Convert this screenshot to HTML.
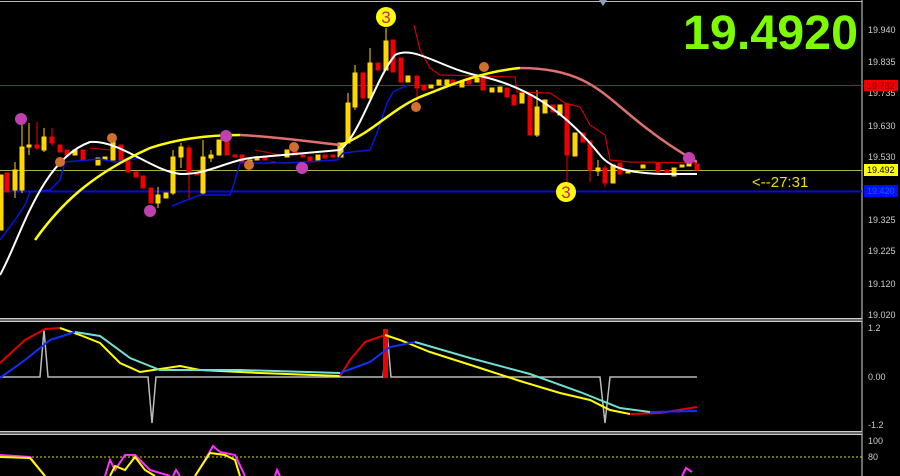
<!DOCTYPE html><html><head><style>body{margin:0;background:#000;width:900px;height:476px;overflow:hidden}svg{display:block}text{font-family:"Liberation Sans",sans-serif}</style></head><body>
<svg width="900" height="476" xmlns="http://www.w3.org/2000/svg">
<rect width="900" height="476" fill="#000"/>
<line x1="0" y1="1.5" x2="862" y2="1.5" stroke="#bbb"/>
<path d="M599 0 L607 0 L603 6Z" fill="#8aa0b8"/>
<line x1="862" y1="0" x2="862" y2="476" stroke="#ddd"/>
<line x1="0" y1="85.5" x2="862" y2="85.5" stroke="#d80000"/>
<line x1="0" y1="170.5" x2="862" y2="170.5" stroke="#b0b030"/>
<line x1="0" y1="191.5" x2="862" y2="191.5" stroke="#0010d0" stroke-width="2"/>
<g fill="#ccc" font-size="9">
<text x="868" y="33">19.940</text><text x="868" y="65">19.835</text><text x="868" y="96">19.735</text><text x="868" y="129">19.630</text><text x="868" y="160">19.530</text><text x="868" y="223">19.325</text><text x="868" y="254">19.225</text><text x="868" y="287">19.120</text><text x="868" y="318">19.020</text>
<text x="868" y="331">1.2</text><text x="868" y="380">0.00</text><text x="868" y="428">-1.2</text><text x="868" y="444">100</text><text x="868" y="460">80</text></g>
<rect x="864" y="80" width="34" height="11" fill="#f00000"/><text x="867" y="89" font-size="9" fill="#800">19.762</text>
<rect x="864" y="164" width="34" height="12" fill="#ffff00"/><text x="867" y="173" font-size="9" fill="#000">19.492</text>
<rect x="864" y="185" width="34" height="12" fill="#0010f0"/><text x="867" y="194" font-size="9" fill="#0060ff">19.420</text>
<text x="683" y="49" font-size="48" font-weight="bold" fill="#7cfc00" textLength="175" lengthAdjust="spacingAndGlyphs">19.4920</text>
<text x="752" y="187" font-size="15" fill="#e8e000">&lt;--27:31</text>
<g stroke-width="1">
<g fill="#ffd700" stroke="#ffd700">
<rect x="0" y="175" width="3" height="55"/><rect x="13" y="170" width="4" height="20"/><line x1="15" y1="162" x2="15" y2="198"/><rect x="20" y="147" width="4" height="43"/><line x1="22" y1="117" x2="22" y2="193"/><rect x="27" y="145" width="4" height="2"/><line x1="29" y1="123" x2="29" y2="155"/><rect x="42" y="137" width="4" height="13"/><line x1="44" y1="128" x2="44" y2="152"/><rect x="73" y="150" width="4" height="5"/><rect x="96" y="158" width="4" height="7"/><rect x="103" y="157" width="4" height="3"/><rect x="111" y="142" width="4" height="18"/><rect x="156" y="195" width="4" height="8"/><line x1="158" y1="187" x2="158" y2="208"/><rect x="164" y="193" width="4" height="5"/><rect x="171" y="157" width="4" height="36"/><line x1="173" y1="150" x2="173" y2="195"/><rect x="179" y="147" width="4" height="10"/><line x1="181" y1="143" x2="181" y2="168"/><rect x="201" y="157" width="4" height="36"/><line x1="203" y1="140" x2="203" y2="195"/><rect x="209" y="155" width="4" height="3"/><line x1="211" y1="150" x2="211" y2="162"/><rect x="217" y="140" width="4" height="15"/><rect x="248" y="160" width="4" height="3"/><rect x="255" y="157" width="4" height="3"/><rect x="285" y="150" width="4" height="7"/><rect x="316" y="155" width="4" height="5"/><rect x="338" y="143" width="5" height="14"/><rect x="346" y="103" width="4" height="40"/><line x1="348" y1="93" x2="348" y2="143"/><rect x="353" y="73" width="4" height="34"/><line x1="355" y1="65" x2="355" y2="110"/><rect x="368" y="63" width="4" height="35"/><line x1="370" y1="48" x2="370" y2="98"/><rect x="384" y="41" width="4" height="29"/><line x1="386" y1="28" x2="386" y2="70"/><rect x="406" y="76" width="4" height="6"/><rect x="429" y="85" width="4" height="3"/><rect x="437" y="80" width="4" height="5"/><rect x="445" y="80" width="4" height="5"/><rect x="460" y="82" width="4" height="5"/><rect x="475" y="78" width="4" height="4"/><rect x="490" y="88" width="4" height="4"/><rect x="498" y="87" width="4" height="5"/><rect x="520" y="93" width="4" height="10"/><rect x="535" y="107" width="4" height="28"/><line x1="537" y1="90" x2="537" y2="137"/><rect x="543" y="100" width="4" height="13"/><rect x="558" y="105" width="4" height="10"/><rect x="573" y="133" width="4" height="23"/><rect x="596" y="168" width="4" height="3"/><line x1="598" y1="160" x2="598" y2="176"/><rect x="611" y="165" width="4" height="18"/><rect x="626" y="170" width="4" height="3"/><rect x="641" y="165" width="4" height="3"/><rect x="672" y="168" width="4" height="8"/><rect x="680" y="165" width="4" height="2"/><rect x="687" y="163" width="4" height="3"/></g>
<g fill="#f00000" stroke="#f00000">
<rect x="5" y="173" width="4" height="19"/><rect x="35" y="145" width="4" height="3"/><line x1="37" y1="122" x2="37" y2="150"/><rect x="50" y="137" width="4" height="6"/><line x1="52" y1="128" x2="52" y2="146"/><rect x="58" y="145" width="4" height="7"/><rect x="65" y="150" width="4" height="5"/><rect x="81" y="150" width="4" height="10"/><rect x="119" y="145" width="4" height="15"/><rect x="126" y="160" width="4" height="12"/><rect x="134" y="172" width="4" height="5"/><rect x="141" y="176" width="4" height="12"/><rect x="149" y="188" width="4" height="15"/><rect x="187" y="148" width="4" height="24"/><line x1="189" y1="145" x2="189" y2="200"/><rect x="195" y="173" width="4" height="2"/><rect x="225" y="140" width="4" height="15"/><rect x="233" y="155" width="4" height="2"/><rect x="240" y="155" width="4" height="8"/><rect x="263" y="158" width="4" height="2"/><rect x="271" y="162" width="4" height="1"/><rect x="293" y="150" width="4" height="5"/><rect x="301" y="155" width="4" height="2"/><rect x="308" y="157" width="4" height="5"/><rect x="323" y="155" width="4" height="3"/><rect x="331" y="155" width="4" height="2"/><rect x="361" y="73" width="4" height="25"/><rect x="376" y="63" width="4" height="7"/><rect x="391" y="40" width="4" height="32"/><rect x="399" y="58" width="4" height="24"/><rect x="415" y="76" width="4" height="12"/><line x1="417" y1="76" x2="417" y2="108"/><rect x="422" y="85" width="4" height="5"/><rect x="451" y="80" width="4" height="4"/><rect x="467" y="80" width="4" height="4"/><rect x="481" y="75" width="4" height="15"/><rect x="505" y="88" width="4" height="9"/><rect x="512" y="95" width="4" height="10"/><rect x="528" y="95" width="4" height="40"/><rect x="551" y="105" width="4" height="7"/><rect x="565" y="104" width="4" height="51"/><line x1="567" y1="104" x2="567" y2="185"/><rect x="581" y="133" width="4" height="9"/><rect x="588" y="141" width="4" height="29"/><line x1="590" y1="141" x2="590" y2="182"/><rect x="603" y="168" width="4" height="15"/><line x1="605" y1="165" x2="605" y2="187"/><rect x="618" y="163" width="4" height="11"/><rect x="656" y="163" width="4" height="9"/><rect x="665" y="170" width="4" height="4"/><rect x="695" y="164" width="4" height="6"/></g></g>
<g fill="none" stroke-linejoin="round">
<path d="M0 240 L15 220 L25 205 L30 192 L50 190 L60 180 L65 162 L100 159 L115 162 L140 158 M172 206 L187 200 L200 195 L230 195 L233 187 L240 163 L287 163 L337 160 L343 153 L370 150 L377 133 L387 103 L393 92 L408 85" stroke="#0018e0" stroke-width="1.5"/>
<path d="M414 25 L420 50 L430 68 L440 75 L515 77 L517 92 L550 93 L565 103 L580 107 L590 125 L605 135 L610 160 L630 162 L697 163" stroke="#d00000" stroke-width="1.2"/>
<path d="M90 148 L110 150 M255 150 L280 155" stroke="#d00000"/>
<path d="M0 275 C20 240,40 160,90 142 C120 140,150 170,180 174 C210 175,230 158,260 157 L340 150 C360 135,375 80,395 55 C415 45,440 68,480 76 C520 85,560 105,600 155 C610 168,630 173,660 174 L697 174" stroke="#fff" stroke-width="2"/>
<path d="M35 240 C60 205,90 175,150 148 C180 138,210 135,240 135" stroke="#ffff00" stroke-width="2.5"/>
<path d="M240 135 C280 137,320 143,340 145" stroke="#e07070" stroke-width="2.5"/>
<path d="M340 145 C370 135,390 110,420 97 C450 85,480 72,520 68" stroke="#ffff00" stroke-width="2.5"/>
<path d="M520 68 C580 68,600 90,630 115 C660 140,680 152,697 162" stroke="#e07070" stroke-width="2.5"/>
</g>
<g font-size="8" text-anchor="middle" fill="#b02050">
<circle cx="21" cy="119" r="6" fill="#c040b0"/><circle cx="150" cy="211" r="6" fill="#c040b0"/><circle cx="226" cy="136" r="6" fill="#c040b0"/><circle cx="302" cy="168" r="6" fill="#c040b0"/><circle cx="689" cy="158" r="6" fill="#c040b0"/>
<circle cx="112" cy="138" r="5" fill="#d07030"/><circle cx="60" cy="162" r="5" fill="#d07030"/><circle cx="294" cy="147" r="5" fill="#d07030"/><circle cx="249" cy="165" r="5" fill="#d07030"/><circle cx="416" cy="107" r="5" fill="#d07030"/><circle cx="484" cy="67" r="5" fill="#d07030"/>
<circle cx="386" cy="17" r="10" fill="#ffff00"/><text x="386" y="23" font-size="17" fill="#d02060">3</text>
<circle cx="566" cy="192" r="10" fill="#ffff00"/><text x="566" y="198" font-size="17" fill="#d02060">3</text></g>
<rect x="0" y="318" width="862" height="4" fill="#ccc"/><rect x="0" y="319.5" width="862" height="1" fill="#000"/>
<rect x="0" y="431" width="862" height="4" fill="#ccc"/><rect x="0" y="432.5" width="862" height="1" fill="#000"/>
<g fill="none" stroke-width="2">
<path d="M0 377 L40 377 L44 330 L48 377 L148 377 L152 423 L156 377 L383 377 L387 331 L391 377 L600 377 L605 423 L610 377 L697 377" stroke="#bbb" stroke-width="1.5"/>
<path d="M384 330 L387 330 L387 377 L384 377Z" fill="#f00000" stroke="#f00000"/>
<path d="M0 363 L25 340 L45 329 L60 328" stroke="#e00000"/>
<path d="M60 328 L80 335 L100 343 L120 363 L140 372 L160 369 L180 366 L200 370 L260 373 L340 376" stroke="#ffff00"/>
<path d="M340 376 L350 360 L365 342 L385 335" stroke="#e00000"/>
<path d="M385 335 L400 340 L430 352 L480 368 L520 381 L560 393 L590 400 L610 410 L630 414" stroke="#ffff00"/>
<path d="M630 414 L660 413 L697 407" stroke="#e00000"/>
<path d="M0 378 L25 360 L50 340 L75 332" stroke="#1030ff"/>
<path d="M75 332 L100 336 L130 358 L160 370 L240 370 L340 373" stroke="#70e0d0"/>
<path d="M340 373 L370 362 L390 347 L415 342" stroke="#1030ff"/>
<path d="M415 342 L470 358 L530 374 L580 392 L620 408 L650 412" stroke="#70e0d0"/>
<path d="M650 412 L697 411" stroke="#1030ff"/>
</g>
<line x1="0" y1="457" x2="862" y2="457" stroke="#e0e000" stroke-dasharray="2,2"/>
<g fill="none" stroke-width="2">
<path d="M0 455 L30 457 L40 470 L45 476 M105 476 L110 460 L115 470 L125 455 L135 455 L150 470 L170 476 M173 476 L176 470 L180 476 M195 476 L205 460 L213 446 L220 452 L235 455 L245 476 M275 476 L277 470 L280 476 M682 476 L686 468 L692 472" stroke="#ff30ff"/>
<path d="M0 457 L30 458 L45 476 M110 476 L115 466 L125 470 L135 457 L145 470 L155 476 M195 476 L210 453 L225 455 L235 460 L240 476" stroke="#ffff00"/>
</g>
</svg></body></html>
